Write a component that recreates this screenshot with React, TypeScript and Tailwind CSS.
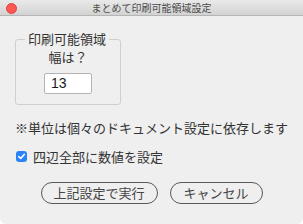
import React, { useState } from 'react';

const jp = { fontFamily: '"Noto Sans CJK JP", "Liberation Sans", sans-serif' };

export default function App() {
  const [width, setWidth] = useState('13');
  const [allSides, setAllSides] = useState(true);

  return (
    <div className="w-[303px] h-[224px] bg-white" style={jp}>
      <div className="h-full flex flex-col bg-[#efefef] rounded-b-[6px] overflow-hidden">
        {/* title bar */}
        <div className="h-[16px] shrink-0 grid grid-cols-[1fr_auto_1fr] items-center bg-gradient-to-b from-[#e9e9e9] to-[#d3d3d3] border-b border-[#b5b5b5]">
          <div className="pl-[6px] flex items-center">
            <span className="w-[11px] h-[11px] rounded-full bg-[#fc5753] border border-[#e0443e]" />
          </div>
          <div className="text-[10px] leading-[16px] text-[#4a4a4a]">まとめて印刷可能領域設定</div>
          <div />
        </div>

        <div className="flex flex-col pl-[15px]">
          <fieldset className="mt-[15px] w-[106px] border border-[#cfcfcf] rounded-[3px] pb-[10px] flex flex-col items-center">
            <legend className="ml-[9px] px-[3px] text-[13px] leading-[16px] text-[#333]">印刷可能領域</legend>
            <div className="mt-[2px] text-[13px] leading-[16px] text-[#333]">幅は？</div>
            <input
              value={width}
              onChange={e => setWidth(e.target.value)}
              className="mt-[8px] w-[48px] h-[21px] bg-white border border-[#b4b4b4] rounded-[2px] px-[6px] text-[14px] text-[#1a1a1a] outline-none"
              style={{ fontFamily: '"Liberation Sans", sans-serif' }}
            />
          </fieldset>

          <div className="mt-[14px] text-[13px] leading-[17px] text-[#333]">※単位は個々のドキュメント設定に依存します</div>

          <label className="mt-[12px] flex items-center gap-[6px] text-[13px] leading-[17px] text-[#333] cursor-default" onClick={() => setAllSides(!allSides)}>
            <span className={`ml-[1px] w-[11px] h-[11px] rounded-[3px] flex items-center justify-center ${allSides ? 'bg-[#2a84f7]' : 'bg-white border border-[#a0a0a0]'}`}>
              {allSides && (
                <svg width="9" height="9" viewBox="0 0 9 9">
                  <path d="M1.8 4.7 L3.7 6.5 L7.2 2.4" fill="none" stroke="white" strokeWidth="1.6" strokeLinecap="round" strokeLinejoin="round" />
                </svg>
              )}
            </span>
            四辺全部に数値を設定
          </label>
        </div>

        <div className="mt-[17px] flex justify-center gap-[12px]">
          <button className="w-[117px] h-[22px] rounded-full border border-[#5a5a5a] text-[13px] text-[#444] bg-[#efefef]">上記設定で実行</button>
          <button className="w-[93px] h-[22px] rounded-full border border-[#5a5a5a] text-[13px] text-[#444] bg-[#efefef]">キャンセル</button>
        </div>
      </div>
    </div>
  );
}
